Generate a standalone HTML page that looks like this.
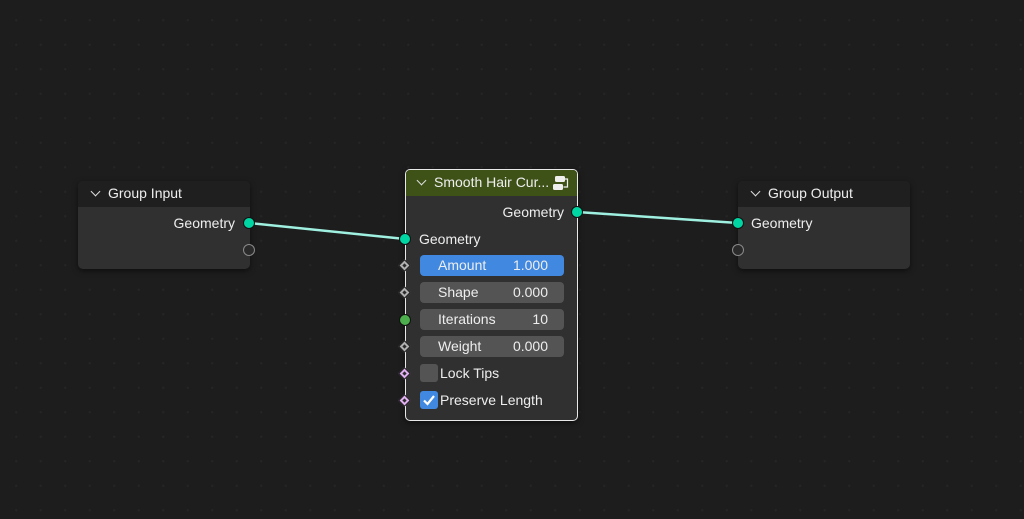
<!DOCTYPE html>
<html><head><meta charset="utf-8"><style>
*{margin:0;padding:0;box-sizing:border-box}
body{width:1024px;height:519px;overflow:hidden;background:#1d1d1d;background-image:radial-gradient(circle,#252525 1px,transparent 1.3px);background-size:24.5px 24.5px;background-position:4px 8px;font-family:"Liberation Sans",sans-serif;font-size:14px;color:#eee;position:relative}
.node{position:absolute;border-radius:5px;overflow:hidden;background:#303030;box-shadow:0 2px 6px rgba(0,0,0,.5)}
.hdr{height:26px;background:#1f1f1f;padding-left:12px;line-height:24px;white-space:nowrap}
.chev{display:inline-block;width:7px;height:7px;border-right:1.5px solid #ddd;border-bottom:1.5px solid #ddd;transform:rotate(45deg);margin:0 9px 3px 2px}
.t{position:absolute;white-space:nowrap}
.sock{position:absolute;width:12px;height:12px;border-radius:50%;background:#00d6a3;border:1px solid #111}
.empty{position:absolute;width:12px;height:12px;border-radius:50%;border:1.5px solid #8a8a8a;background:#2a2a2a}
.dia{position:absolute;width:9px;height:9px;transform:rotate(45deg);border:1px solid #1a1a1a}
.dia::after{content:"";position:absolute;left:2px;top:2px;width:3px;height:3px;background:#2a2a2a}
.fld{position:absolute;left:14px;width:144px;height:21px;border-radius:4px;background:#545454;line-height:21px}
.fld span{position:absolute}
.fld .l{left:18px}.fld .r{right:16px}
.cb{position:absolute;left:14px;width:18px;height:18px;border-radius:3px;background:#545454}
</style></head><body>
<svg width="1024" height="519" style="position:absolute;left:0;top:0">
<line x1="249" y1="223" x2="405" y2="239" stroke="#9ff0e0" stroke-width="2.5"/>
<line x1="577" y1="212" x2="738" y2="223" stroke="#9ff0e0" stroke-width="2.5"/>
</svg>

<div class="node" style="left:78px;top:181px;width:172px;height:88px">
<div class="hdr"><span class="chev"></span>Group Input</div>
<div class="t" style="right:15px;top:34px">Geometry</div>
</div>
<div class="sock" style="left:243px;top:217px"></div>
<div class="empty" style="left:243px;top:244px"></div>

<div class="node" style="left:738px;top:181px;width:172px;height:88px">
<div class="hdr"><span class="chev"></span>Group Output</div>
<div class="t" style="left:13px;top:34px">Geometry</div>
</div>
<div class="sock" style="left:732px;top:217px"></div>
<div class="empty" style="left:732px;top:244px"></div>

<div class="node" style="left:405px;top:169px;width:173px;height:252px;border:1.5px solid #e8e8e8;background:#303030">
<div class="hdr" style="background:#3e5218;height:26px;padding-left:10px;line-height:25px"><span class="chev"></span>Smooth Hair Cur...</div>
<svg style="position:absolute;left:146px;top:5px" width="18" height="17"><rect x="3" y="1" width="10" height="6" rx="1.5" fill="#eee"/><rect x="1" y="9" width="10" height="6" rx="1.5" fill="#eee"/><path d="M13 4 h2.5 v8 h-4" stroke="#eee" stroke-width="1.2" fill="none"/></svg>
<div class="t" style="right:13px;top:34px">Geometry</div>
<div class="t" style="left:13px;top:61px">Geometry</div>
<div class="fld" style="top:85px;background:#4088e0"><span class="l">Amount</span><span class="r">1.000</span></div>
<div class="fld" style="top:112px"><span class="l">Shape</span><span class="r">0.000</span></div>
<div class="fld" style="top:139px"><span class="l">Iterations</span><span class="r">10</span></div>
<div class="fld" style="top:166px"><span class="l">Weight</span><span class="r">0.000</span></div>
<div class="cb" style="top:194px"></div>
<div class="t" style="left:34px;top:195px">Lock Tips</div>
<div class="cb" style="top:221px;background:#4088e0"><svg width="18" height="18"><path d="M4 9.5 L7.5 13 L14 5" stroke="#fff" stroke-width="2.2" fill="none"/></svg></div>
<div class="t" style="left:34px;top:222px">Preserve Length</div>
</div>
<div class="sock" style="left:399px;top:233px"></div>
<div class="sock" style="left:571px;top:206px"></div>
<div class="dia" style="left:400px;top:261px;background:#b0b0b0"></div>
<div class="dia" style="left:400px;top:288px;background:#b0b0b0"></div>
<div class="sock" style="left:399px;top:314px;background:#4cae4c"></div>
<div class="dia" style="left:400px;top:342px;background:#b0b0b0"></div>
<div class="dia" style="left:400px;top:369px;background:#e0b0f0"></div>
<div class="dia" style="left:400px;top:396px;background:#e0b0f0"></div>
</body></html>
